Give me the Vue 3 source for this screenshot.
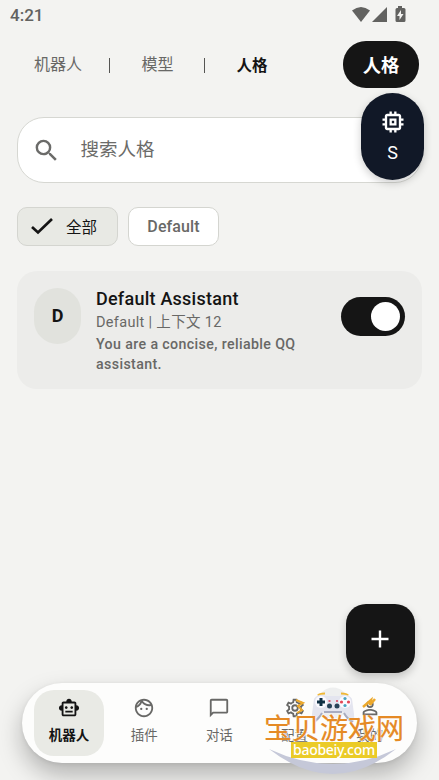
<script setup>
import { ref } from 'vue'

const sections = ['机器人', '模型', '人格']
const enabled = ref(true)
const navItems = [
  { id: 'bot', label: '机器人', active: true },
  { id: 'plugin', label: '插件' },
  { id: 'chat', label: '对话' },
  { id: 'config', label: '配置' },
  { id: 'me', label: '我的' }
]
const iconPaths = {
  bot: 'M20 9V7c0-1.1-.9-2-2-2h-3c0-1.66-1.34-3-3-3S9 3.34 9 5H6c-1.1 0-2 .9-2 2v2c-1.66 0-3 1.34-3 3s1.34 3 3 3v4c0 1.1.9 2 2 2h12c1.1 0 2-.9 2-2v-4c1.66 0 3-1.34 3-3s-1.34-3-3-3zm-2 10H6V7h12v12zM9 13c-.83 0-1.5-.67-1.5-1.5S8.170 10 9 10s1.500.67 1.500 1.500S9.830 13 9 13zm7.500-1.500c0 .83-.67 1.500-1.500 1.500s-1.500-.67-1.500-1.500.67-1.500 1.500-1.500 1.500.67 1.500 1.500zM8 15h8v2H8v-2z',
  plugin: 'M10.250 13a1.250 1.250 0 1 1-2.500 0 1.250 1.250 0 0 1 2.500 0zM15 11.750a1.250 1.250 0 1 0 0 2.500 1.250 1.250 0 0 0 0-2.500zM22 12c0 5.520-4.480 10-10 10S2 17.520 2 12 6.480 2 12 2s10 4.480 10 10zM10.660 4.120C12.060 6.440 14.600 8 17.500 8c.46 0 .91-.05 1.340-.12C17.440 5.560 14.900 4 12 4c-.46 0-.91.05-1.340.12zM4.420 9.470c1.710-.97 3.030-2.550 3.660-4.440C6.370 6 5.050 7.580 4.420 9.470zM20 12c0-.78-.12-1.530-.33-2.240-.7.150-1.420.240-2.170.240-3.130 0-5.920-1.440-7.760-3.690C8.690 8.870 6.600 10.880 4 11.860c.01.040 0 .09 0 .14 0 4.410 3.590 8 8 8s8-3.590 8-8z',
  chat: 'M4 4h16v12H5.170L4 17.170V4m0-2c-1.100 0-1.990.9-1.990 2L2 22l4-4h14c1.100 0 2-.9 2-2V4c0-1.100-.9-2-2-2H4z',
  config: 'M19.430 12.980c.04-.32.070-.64.070-.98s-.03-.66-.07-.98l2.110-1.650c.19-.15.240-.42.120-.64l-2-3.460c-.12-.22-.39-.3-.61-.22l-2.490 1c-.52-.4-1.080-.73-1.690-.98l-.38-2.650C14.460 2.180 14.250 2 14 2h-4c-.25 0-.46.180-.49.420l-.38 2.650c-.61.250-1.170.590-1.690.98l-2.490-1c-.23-.09-.49 0-.61.220l-2 3.460c-.13.220-.07.490.12.640l2.110 1.650c-.04.320-.07.650-.07.980s.03.660.07.980l-2.110 1.650c-.19.150-.24.420-.12.640l2 3.460c.12.220.39.300.61.220l2.490-1c.52.400 1.080.730 1.690.980l.38 2.650c.03.240.24.420.49.420h4c.25 0 .46-.18.490-.42l.38-2.650c.61-.25 1.170-.59 1.690-.98l2.490 1c.23.090.49 0 .61-.22l2-3.460c.12-.22.070-.49-.12-.64l-2.110-1.650zm-1.980-1.710c.04.310.05.520.05.730s-.02.430-.05.730l-.14 1.130.89.700 1.080.84-.7 1.210-1.270-.51-1.040-.42-.9.680c-.43.320-.84.560-1.250.730l-1.060.43-.16 1.130-.2 1.350h-1.400l-.35-2.480-1.060-.43c-.43-.18-.83-.41-1.230-.71l-.91-.7-1.060.43-1.270.51-.7-1.210 1.080-.84.890-.7-.14-1.130c-.03-.31-.05-.54-.05-.74s.02-.43.050-.73l.14-1.130-.89-.7-1.080-.84.700-1.210 1.270.51 1.040.42.900-.68c.43-.32.840-.56 1.250-.73l1.060-.43.160-1.130.200-1.350h1.390l.35 2.480 1.060.43c.43.180.83.410 1.230.71l.91.700 1.060-.43 1.270-.51.700 1.210-1.070.85-.89.700.14 1.130zM12 8a4 4 0 1 0 0 8 4 4 0 0 0 0-8zm0 6a2 2 0 1 1 0-4 2 2 0 0 1 0 4z',
  me: 'M12 5.900a2.100 2.100 0 1 1 0 4.200 2.100 2.100 0 0 1 0-4.200m0 9c2.970 0 6.100 1.460 6.100 2.100v1.100H5.900V17c0-.64 3.130-2.100 6.100-2.100M12 4a4 4 0 1 0 0 8 4 4 0 0 0 0-8zm0 9c-2.670 0-8 1.340-8 4v3h16v-3c0-2.660-5.330-4-8-4z'
}
</script>

<template>
  <main class="screen">
    <header class="status">
      <span class="clock">4:21</span>
      <svg class="signals" width="54" height="18" viewBox="0 0 54 18">
        <path d="M0 4.500Q9-2.500 18 4.500L9 16z" />
        <path d="M20 16L35 1v15z" />
        <path fill-rule="evenodd" d="M46 0h4v2h2q1.500 0 1.500 1.500v11q0 1.500-1.500 1.500h-7q-1.500 0-1.500-1.500v-11Q43.500 2 45 2h1zM49 4l-4 6h2.500v4l4-6H49z" />
      </svg>
    </header>

    <div class="header">
      <nav class="tabs">
        <template v-for="(s, i) in sections" :key="s">
          <i v-if="i" class="bar"></i>
          <span :class="{ current: i === 2 }">{{ s }}</span>
        </template>
      </nav>
      <button class="primary">人格</button>
    </div>

    <div class="search">
      <svg width="29" height="29" viewBox="0 0 24 24"><path d="M15.500 14h-.79l-.28-.27A6.470 6.470 0 0 0 16 9.500 6.500 6.500 0 1 0 9.500 16c1.610 0 3.090-.59 4.230-1.570l.27.280v.79l5 4.990L20.490 19zm-6 0a4.500 4.500 0 1 1 0-9 4.500 4.500 0 0 1 0 9z" /></svg>
      <span>搜索人格</span>
    </div>

    <div class="chips">
      <button class="chip selected">
        <svg width="24" height="20" viewBox="0 0 24 20"><path d="M2 11l6 5.500L22 3" /></svg>
        <span>全部</span>
      </button>
      <button class="chip">Default</button>
    </div>

    <article class="card">
      <div class="avatar">D</div>
      <div class="info">
        <h2>Default Assistant</h2>
        <p class="meta">Default | 上下文 12</p>
        <p class="prompt">You are a concise, reliable QQ assistant.</p>
      </div>
      <button class="switch" :class="{ on: enabled }" @click="enabled = !enabled"><i></i></button>
    </article>

    <div class="bottom">
      <button class="fab">
        <svg width="18" height="18" viewBox="0 0 18 18"><path d="M9 .5v17M.5 9h17" /></svg>
      </button>
      <nav class="dock">
        <div v-for="item in navItems" :key="item.id" class="item" :class="{ active: item.active }">
          <svg width="22" height="22" viewBox="0 0 24 24"><path fill-rule="evenodd" :d="iconPaths[item.id]" /></svg>
          <span>{{ item.label }}</span>
        </div>
      </nav>
    </div>

    <aside class="floating">
      <svg width="28" height="28" viewBox="0 0 24 24"><path fill-rule="evenodd" d="M15 9H9v6h6V9zm-2 4h-2v-2h2v2zm8-2V9h-2V7c0-1.100-.9-2-2-2h-2V3h-2v2h-2V3H9v2H7c-1.100 0-2 .9-2 2v2H3v2h2v2H3v2h2v2c0 1.100.9 2 2 2h2v2h2v-2h2v2h2v-2h2c1.100 0 2-.9 2-2v-2h2v-2h-2v-2h2zm-4 6H7V7h10v10z" /></svg>
      <span>S</span>
    </aside>

    <div class="brand">
      <svg class="brand-art" width="140" height="92" viewBox="0 0 140 92">
        <circle cx="69" cy="18" r="15.500" fill="#eeefef" />
        <path d="M5 64Q69 94 132 64Q69 114 5 64z" fill="#c5c8d8" />
        <path d="M54 10.500q1-2 7-2M77 8.500q6 0 7 2" fill="none" stroke="#f0b735" stroke-width="2" />
        <path d="M50 14q2-4 8-4l5 1h12l5-1q6 0 8 4l2 15q1 9-3 9-3-1-8-11H59q-5 10-8 11-4 0-3-9z" fill="#e4e5ef" />
        <path d="M49 37q6-3 9-9M89 37q-6-3-9-9M60 27h18" fill="none" stroke="#a8acc0" stroke-width="2" />
        <circle cx="57" cy="17" r="6" fill="#fafaff" /><circle cx="81" cy="17" r="6" fill="#fafaff" />
        <path d="M57 13v8M53 17h8" stroke="#103044" stroke-width="3" />
        <circle cx="65.500" cy="21" r="2.500" fill="#274359" /><circle cx="73" cy="21" r="2.500" fill="#274359" />
        <path d="M64.500 16h2M72 16h2" stroke="#d63c58" stroke-width="1.500" />
        <circle cx="81" cy="13.500" r="1.600" fill="#4aa3c0" /><circle cx="81" cy="20.500" r="1.600" fill="#4aa3c0" />
        <circle cx="77.500" cy="17" r="1.600" fill="#e44657" /><circle cx="84.500" cy="17" r="1.600" fill="#e44657" />
        <path d="M32 15l7 3-5 3 4 4-5 3" fill="none" stroke="#eda92c" stroke-width="2" />
        <path d="M99 22l8-7-1 5 5-6" fill="none" stroke="#eda92c" stroke-width="2.500" />
      </svg>
      <strong>宝贝游戏网</strong>
      <span class="domain">baobeiy.com</span>
    </div>
  </main>
</template>

<style>
body { background: #f3f3f1; overflow: hidden; }
</style>

<style scoped>
.screen { position: relative; box-sizing: border-box; width: 439px; height: 780px; overflow: hidden; display: flex; flex-direction: column; background: #f3f3f1; color: #141414; font-family: Roboto, "Noto Sans CJK SC", sans-serif; }
button { font-family: inherit; border: 0; margin: 0; padding: 0; }
svg { display: block; flex: none; fill: currentColor; }
h2, p { margin: 0; }
.status { height: 30px; padding: 0 33px 0 10px; display: flex; justify-content: space-between; align-items: center; color: #626260; }
.clock { font-size: 17px; font-weight: 500; line-height: 20px; }
.signals { margin-top: -1px; }
.header { height: 70px; padding: 0 20px 0 34px; display: flex; justify-content: space-between; align-items: center; }
.tabs { display: flex; align-items: center; font-size: 16px; line-height: 22px; color: #686866; }
.bar { width: 1px; height: 15px; margin: 0 31.500px 0 27px; background: #555553; }
.bar ~ .bar { margin-left: 30.500px; }
.tabs .current { padding-top: 2px; font-size: 15.500px; font-weight: 700; color: #141414; }
.primary { width: 76px; height: 47px; margin-top: -1px; padding-bottom: 1px; border-radius: 23px; background: #151515; color: white; font-size: 18.300px; font-weight: 700; }
.search { box-sizing: border-box; height: 66px; margin: 17px 17px 0; padding: 0 14px; display: flex; align-items: center; gap: 19.500px; border: 1px solid #d6d7d2; border-radius: 27px; background: white; color: #6b6b69; font-size: 18.500px; }
.search span { line-height: 26px; }
.chips { display: flex; gap: 10px; margin: 24px 17px 0; }
.chip { box-sizing: border-box; display: flex; align-items: center; justify-content: center; width: 91px; height: 39px; border: 1px solid #d4d5d0; border-radius: 10px; background: white; color: #696967; font-size: 16px; font-weight: 500; letter-spacing: .1px; }
.chip.selected { width: 101px; padding-right: 8px; padding-bottom: 2px; gap: 12px; background: #e8e9e4; color: #141414; font-weight: 400; font-size: 15.500px; }
.chip svg { fill: none; stroke: currentColor; stroke-width: 2.700; }
.card { box-sizing: border-box; height: 118px; margin: 25px 17px 0; padding: 17px 17px 0; display: flex; align-items: flex-start; border-radius: 20px; background: #ececea; }
.avatar { flex: none; width: 47px; height: 56px; padding-bottom: 2px; box-sizing: border-box; border-radius: 24px; display: grid; place-items: center; background: #e1e2dd; font-size: 18px; font-weight: 700; }
.info { flex: 1; margin: -1px 0 0 15px; }
h2 { font-size: 18px; font-weight: 500; line-height: 24px; letter-spacing: .24px; }
.meta { font-size: 14.500px; line-height: 23px; letter-spacing: .32px; color: #686866; }
.prompt { width: 220px; font-size: 14.200px; font-weight: 500; line-height: 20px; letter-spacing: .38px; color: #686866; }
.switch { flex: none; width: 64px; height: 39px; margin-top: 9px; padding: 5px; display: flex; border-radius: 20px; background: #bbb; }
.switch.on { justify-content: flex-end; background: #151515; }
.switch i { width: 29px; height: 29px; border-radius: 50%; background: white; }
.bottom { margin-top: auto; padding: 0 22px 17px; display: flex; flex-direction: column; gap: 10px; }
.fab { align-self: flex-end; margin-right: 2.500px; width: 68.500px; height: 69px; border-radius: 20px; display: grid; place-items: center; background: #151515; color: white; box-shadow: 0 4px 8px #0003; }
.fab svg { stroke: currentColor; stroke-width: 2.400; }
.dock { box-sizing: border-box; height: 80px; padding: 7px 12px; display: flex; gap: 5.200px; border-radius: 40px; background: #fdfdfc; box-shadow: 0 12px 24px #0004, 0 1px 4px #00000012; }
.item { width: 70px; height: 66px; display: flex; flex-direction: column; align-items: center; padding-top: 7px; box-sizing: border-box; gap: 7px; color: #686866; font-size: 13.500px; line-height: 19px; border-radius: 20px; }
.item.active { background: #e9eae5; color: #141414; font-weight: 700; }
.floating { position: absolute; left: 361px; top: 93px; width: 63px; height: 87px; border-radius: 32px; background: #111827; color: white; display: flex; flex-direction: column; align-items: center; box-sizing: border-box; padding-top: 15px; gap: 5px; font-size: 18px; line-height: 23px; box-shadow: 0 3px 8px #0003; }
.brand { position: absolute; left: 264px; top: 685px; width: 140px; height: 92px; display: flex; flex-direction: column; align-items: center; }
.brand-art { position: absolute; left: 0; top: 0; }
.brand strong { position: relative; margin-top: 26px; font-size: 28px; line-height: 38px; font-weight: 400; color: #e58a25; -webkit-text-stroke: .2px #e58a25; text-shadow: 1px 0 1px white, -1px 0 1px white; white-space: nowrap; }
.domain { position: relative; margin-top: -7px; width: 86px; height: 16px; background: #ebcb27; color: white; font-family: "Noto Sans", sans-serif; font-size: 14px; font-weight: 500; line-height: 15px; letter-spacing: -.3px; text-align: center; }
</style>
